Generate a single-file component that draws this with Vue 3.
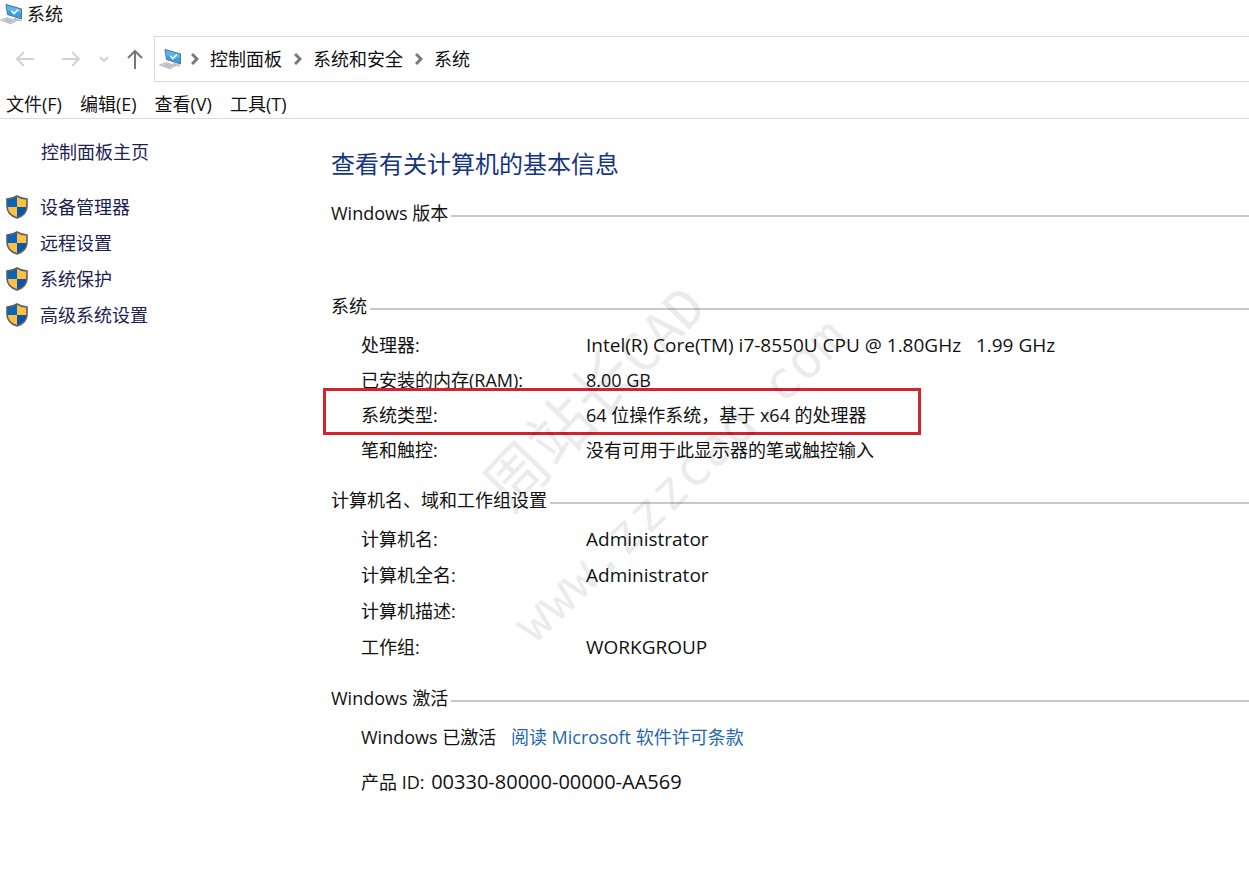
<template>
  <div class="window">
    <!-- Title bar -->
    <header class="title-bar">
      <svg class="pc-icon" viewBox="0 0 24 22" aria-hidden="true">
        <path d="M6 1.5 L21.5 6 V16 L7.5 11.5 Z" fill="#3e9fe0" />
        <path d="M6 1.5 L21.5 6 V10 L7 7.5 Z" fill="#5bb6ee" />
        <path d="M6 1.5 L21.5 6 V16 L7.5 11.5 Z" fill="none" stroke="#4c7591" />
        <path d="M11.5 8 L14 10.5 L18 6.5" fill="none" stroke="#fff" stroke-width="1.6" />
        <path d="M14 14.5 V17 L20 18.5 L22 17.5 L18 16" fill="#b9c2c8" />
        <path d="M0.5 17 L7 14.5 L17 17.5 L11 21 Z" fill="#d5dade" stroke="#a9b1b6" stroke-width="0.7" />
        <path d="M4 17 L11 19.5 M6 16 L14 18.5" stroke="#929ca2" stroke-width="0.7" />
      </svg>
      <span>系统</span>
    </header>

    <!-- Navigation and address -->
    <div class="nav-bar">
      <div class="nav-buttons">
        <button class="nav-btn" aria-label="后退" disabled>
          <svg viewBox="0 0 20 20"><path d="M19 10 H2 M9 3 L2 10 L9 17" /></svg>
        </button>
        <button class="nav-btn" aria-label="前进" disabled>
          <svg viewBox="0 0 20 20"><path d="M1 10 H18 M11 3 L18 10 L11 17" /></svg>
        </button>
        <button class="nav-btn recent" aria-label="最近浏览的位置" disabled>
          <svg viewBox="0 0 10 10"><path d="M1 3 L5 7 L9 3" /></svg>
        </button>
        <button class="nav-btn up" aria-label="向上">
          <svg viewBox="0 0 20 20"><path d="M10 20 V2 M3 9 L10 2 L17 9" /></svg>
        </button>
      </div>
      <nav class="address">
        <svg class="pc-icon" viewBox="0 0 24 22" aria-hidden="true">
          <path d="M6 1.5 L21.5 6 V16 L7.5 11.5 Z" fill="#3e9fe0" />
          <path d="M6 1.5 L21.5 6 V10 L7 7.5 Z" fill="#5bb6ee" />
          <path d="M6 1.5 L21.5 6 V16 L7.5 11.5 Z" fill="none" stroke="#4c7591" />
          <path d="M11.5 8 L14 10.5 L18 6.5" fill="none" stroke="#fff" stroke-width="1.6" />
          <path d="M14 14.5 V17 L20 18.5 L22 17.5 L18 16" fill="#b9c2c8" />
          <path d="M0.5 17 L7 14.5 L17 17.5 L11 21 Z" fill="#d5dade" stroke="#a9b1b6" stroke-width="0.7" />
          <path d="M4 17 L11 19.5 M6 16 L14 18.5" stroke="#929ca2" stroke-width="0.7" />
        </svg>
        <template v-for="crumb in crumbs" :key="crumb">
          <svg class="chevron" viewBox="0 0 8 12" aria-hidden="true"><path d="M1 1 L6 6 L1 11" /></svg>
          <a href="#" class="crumb">{{ crumb }}</a>
        </template>
      </nav>
    </div>

    <!-- Menu -->
    <div class="menu-bar">
      <button v-for="item in menus" :key="item" class="menu-item">{{ item }}</button>
    </div>

    <div class="content">
      <!-- Sidebar -->
      <aside class="sidebar">
        <a href="#" class="home-link">控制面板主页</a>
        <a v-for="task in tasks" :key="task" href="#" class="task">
          <svg class="shield" viewBox="0 0 22 24" aria-hidden="true">
            <path d="M11 1 C8 3 4 4 1 4 V12 H11 Z" fill="#0a63bd" />
            <path d="M11 1 C14 3 18 4 21 4 V12 H11 Z" fill="#fdc13f" />
            <path d="M1 12 C1 17 5 21 11 23 V12 H1 Z" fill="#fdc13f" />
            <path d="M21 12 C21 17 17 21 11 23 V12 H21 Z" fill="#0a55a6" />
            <path
              d="M11 1 C8 3 4 4 1 4 V11 C1 17 5 21 11 23 C17 21 21 17 21 11 V4 C18 4 14 3 11 1 Z"
              fill="none"
              stroke="#595f63"
              stroke-width="1.6"
            />
          </svg>
          <span>{{ task }}</span>
        </a>
      </aside>

      <!-- Details -->
      <main class="main">
        <h1>查看有关计算机的基本信息</h1>

        <section class="group edition">
          <h2>Windows 版本</h2>
        </section>

        <section class="group">
          <h2>系统</h2>
          <table class="info compact">
            <tbody>
              <tr v-for="row in systemRows" :key="row.label">
                <th scope="row">
                  {{ row.label }}
                  <span v-if="row.marked" class="mark"></span>
                </th>
                <td :class="{ latin: row.latin }">{{ row.value }}</td>
              </tr>
            </tbody>
          </table>
        </section>

        <section class="group">
          <h2>计算机名、域和工作组设置</h2>
          <table class="info">
            <tbody>
              <tr v-for="row in nameRows" :key="row.label">
                <th scope="row">{{ row.label }}</th>
                <td class="latin">{{ row.value }}</td>
              </tr>
            </tbody>
          </table>
        </section>

        <section class="group">
          <h2>Windows 激活</h2>
          <div class="activation">
            <p>Windows 已激活 <a href="#" class="license">阅读 Microsoft 软件许可条款</a></p>
            <p class="product">产品 ID: <span>00330-80000-00000-AA569</span></p>
          </div>
        </section>

        <div class="watermark brand">周站长<span>CAD</span></div>
        <div class="watermark site">www.zzzcad.com</div>
      </main>
    </div>
  </div>
</template>

<script setup>
const crumbs = ['控制面板', '系统和安全', '系统'];
const menus = ['文件(F)', '编辑(E)', '查看(V)', '工具(T)'];
const tasks = ['设备管理器', '远程设置', '系统保护', '高级系统设置'];

const systemRows = [
  { label: '处理器:', value: 'Intel(R) Core(TM) i7-8550U CPU @ 1.80GHz   1.99 GHz', latin: true },
  { label: '已安装的内存(RAM):', value: '8.00 GB' },
  { label: '系统类型:', value: '64 位操作系统，基于 x64 的处理器', marked: true },
  { label: '笔和触控:', value: '没有可用于此显示器的笔或触控输入' },
];

const nameRows = [
  { label: '计算机名:', value: 'Administrator' },
  { label: '计算机全名:', value: 'Administrator' },
  { label: '计算机描述:', value: '' },
  { label: '工作组:', value: 'WORKGROUP' },
];
</script>

<style>
body {
  margin: 0;
  background: #fff;
}
</style>

<style scoped>
.window {
  min-height: 100vh;
  overflow: hidden;
  font-family: "Open Sans", "Noto Sans CJK SC", sans-serif;
  font-size: 18px;
  line-height: 24px;
  color: #111;
}

a {
  color: inherit;
  text-decoration: none;
}

button {
  padding: 0;
  border: 0;
  background: none;
  font: inherit;
  color: inherit;
}

.title-bar {
  display: flex;
  align-items: center;
  gap: 3px;
  height: 28px;
}

.pc-icon {
  width: 24px;
  height: 22px;
  flex: none;
}

.nav-bar {
  display: flex;
  height: 46px;
  margin-top: 8px;
}

.nav-buttons {
  display: flex;
  align-items: center;
  box-sizing: border-box;
  width: 154px;
  padding-left: 15px;
  flex: none;
}

.nav-btn {
  display: flex;
  width: 20px;
  margin-right: 26px;
  color: #d2d2d2;
}

.nav-btn svg {
  width: 20px;
  height: 20px;
  fill: none;
  stroke: currentColor;
  stroke-width: 2;
}

.nav-btn.recent {
  width: 10px;
  margin-right: 16px;
  margin-left: -8px;
}

.nav-btn.recent svg {
  width: 10px;
  height: 10px;
}

.nav-btn.up {
  margin-right: 0;
  color: #777;
}

.address {
  display: flex;
  align-items: center;
  flex: 1;
  padding-left: 4px;
  border: 1px solid #d9d9d9;
  border-right: 0;
}

.chevron {
  width: 8px;
  height: 12px;
  margin: 0 11px 0 8px;
  fill: none;
  stroke: #7a7a7a;
  stroke-width: 3;
}

.crumb + .chevron {
  margin-left: 12px;
}

.menu-bar {
  display: flex;
  align-items: flex-end;
  gap: 18px;
  height: 34px;
  padding: 0 0 2px 6px;
  border-bottom: 1px solid #dcdcdc;
}

.content {
  display: flex;
}

.sidebar {
  box-sizing: border-box;
  width: 331px;
  padding-top: 21px;
  flex: none;
  color: #1c2150;
}

.home-link {
  display: block;
  margin: 0 0 25px 41px;
}

.task {
  display: flex;
  align-items: center;
  gap: 12px;
  height: 36px;
  padding-left: 6px;
}

.shield {
  width: 22px;
  height: 24px;
}

.main {
  position: relative;
  flex: 1;
  padding-top: 29px;
}

h1 {
  margin: 0 0 21px;
  font-size: 24px;
  font-weight: 400;
  line-height: 32px;
  color: #15357f;
}

.group {
  margin-bottom: 21px;
}

.edition {
  min-height: 72px;
}

h2 {
  display: flex;
  align-items: center;
  gap: 3px;
  margin: 0 0 9px;
  font-size: 18px;
  font-weight: 400;
  line-height: 24px;
}

h2::after {
  content: "";
  flex: 1;
  height: 2px;
  margin-top: 6px;
  background: #c8c8c8;
}

.info {
  margin-left: 30px;
  border-collapse: collapse;
}

.info th,
.info td {
  height: 36px;
  padding: 0;
  font-weight: 400;
  text-align: left;
  white-space: pre-wrap;
}

.info th {
  position: relative;
  width: 225px;
  white-space: nowrap;
}

.compact th,
.compact td {
  height: 35px;
}

.info .latin {
  font-size: 19px;
}

.mark {
  position: absolute;
  top: -9px;
  left: -38px;
  box-sizing: border-box;
  width: 598px;
  height: 47px;
  border: 3px solid #d0252f;
}

.activation {
  margin-left: 30px;
}

.activation p {
  margin: 0 0 9px;
  line-height: 36px;
}

.license {
  margin-left: 10px;
  color: #1f68ad;
}

.product span {
  margin-left: 2px;
  font-size: 20px;
}

.watermark {
  position: absolute;
  color: rgba(0, 0, 0, 0.08);
  white-space: nowrap;
  pointer-events: none;
}

.brand {
  top: 278px;
  left: 264px;
  font-size: 63px;
  line-height: 60px;
  transform: translate(-50%, -50%) rotate(-46deg);
}

.brand span {
  font-family: "DejaVu Sans Mono", monospace;
  font-size: 53px;
}

.site {
  top: 361px;
  left: 349px;
  font-family: "DejaVu Sans Mono", monospace;
  font-size: 52px;
  line-height: 60px;
  transform: translate(-50%, -50%) rotate(-44deg);
}
</style>
